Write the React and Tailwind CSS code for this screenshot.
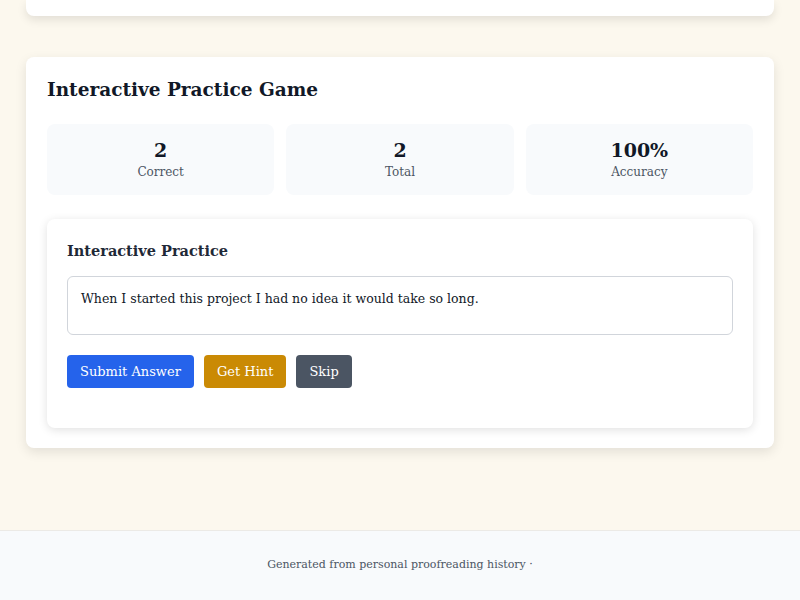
export default function App() {
  const stats = [
    ["2", "Correct"],
    ["2", "Total"],
    ["100%", "Accuracy"],
  ];
  return (
    <div className="min-h-[600px] bg-[#fcf8ee] flex flex-col" style={{ fontFamily: '"DejaVu Serif", "Liberation Serif", serif' }}>
      <div className="px-[26px]">
        <div className="h-4 bg-white rounded-b-lg shadow-[0_4px_10px_rgba(0,0,0,0.1)]" />
        <div className="mt-[41px] bg-white rounded-lg shadow-[0_4px_12px_rgba(0,0,0,0.1)] px-[21px] pt-[20px] pb-[20px]">
          <h2 className="text-[18.5px] leading-[26px] font-bold text-[#111827]">Interactive Practice Game</h2>
          <div className="mt-[21px] grid grid-cols-3 gap-3">
            {stats.map(([v, l]) => (
              <div key={l} className="bg-[#f8fafc] rounded-lg h-[71px] flex flex-col items-center justify-center">
                <div className="text-[19px] leading-6 font-bold text-[#111827]">{v}</div>
                <div className="text-[12px] leading-5 text-[#4b5563]">{l}</div>
              </div>
            ))}
          </div>
          <div className="mt-6 bg-white rounded-lg shadow-[0_2px_10px_rgba(0,0,0,0.12)] px-5 pt-5 pb-10">
            <h3 className="text-[14.5px] leading-6 font-bold text-[#1f2937]">Interactive Practice</h3>
            <div className="mt-[13px] border border-[#d1d5db] rounded-md h-[59px] px-[13px] pt-[13px] text-[12.5px] text-[#111827]">
              When I started this project I had no idea it would take so long.
            </div>
            <div className="mt-5 flex gap-[10px]">
              <button className="h-[33px] px-[13px] rounded bg-[#2563eb] text-white text-[13px]">Submit Answer</button>
              <button className="h-[33px] px-[13px] rounded bg-[#ca8a04] text-white text-[13px]">Get Hint</button>
              <button className="h-[33px] px-[13px] rounded bg-[#4b5563] text-white text-[13px]">Skip</button>
            </div>
          </div>
        </div>
      </div>
      <div className="mt-auto h-[70px] bg-[#f8fafc] border-t border-[#eceae6] flex items-center justify-center text-[11px] text-[#4b5563]">
        Generated from personal proofreading history ·
      </div>
    </div>
  );
}
